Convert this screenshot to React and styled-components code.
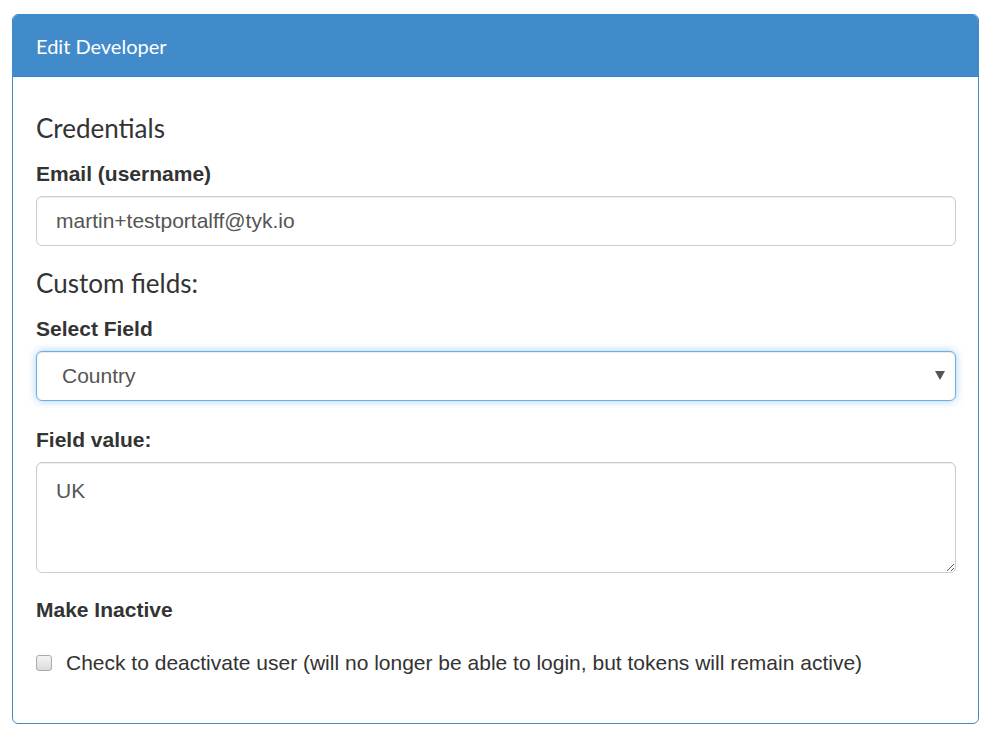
import styled, { createGlobalStyle } from 'styled-components'

const Global = createGlobalStyle`
  * { box-sizing: border-box; }
  body {
    margin: 0;
    background: #fff;
    font-family: "Liberation Sans", Arial, sans-serif;
    color: #333;
  }
`

const Page = styled.div`
  padding: 14px 14px 16px 12px;
`

const Panel = styled.section`
  border: 1.5px solid #428bca;
  border-radius: 6px;
  background: #fff;
  overflow: hidden;
`

const PanelHeading = styled.header`
  background: #428bca;
  color: #fff;
  padding: 0 23px;
  height: 62px;
  display: flex;
  align-items: center;
  font-family: Lato, "Open Sans", sans-serif;
  font-size: 20px;
  border-bottom: 1px solid #3b80bd;
`

const PanelBody = styled.div`
  padding: 35px 22px 48px 23px;
`

const SectionTitle = styled.h3`
  margin: 0 0 18px;
  font-family: Lato, "Open Sans", sans-serif;
  font-weight: 400;
  font-size: 26px;
  line-height: 32px;
  color: #333;
`

const Group = styled.div`
  margin-bottom: ${p => p.$gap || 21}px;
`

const Label = styled.label`
  display: block;
  font-weight: 700;
  font-size: 21px;
  line-height: 24px;
  margin-bottom: 10px;
  color: #333;
`

const fieldBase = `
  display: block;
  width: 100%;
  font-family: "Liberation Sans", Arial, sans-serif;
  font-size: 21px;
  color: #555;
  background: #fff;
  border: 1.5px solid #ccc;
  border-radius: 6px;
  box-shadow: inset 0 1px 1px rgba(0,0,0,.075);
  outline: none;
`

const Input = styled.input`
  ${fieldBase}
  height: 50px;
  padding: 0 19px;
`

const SelectBox = styled.div`
  ${fieldBase}
  position: relative;
  height: 50px;
  padding: 0 25px;
  display: flex;
  align-items: center;
  border-color: #66afe9;
  box-shadow: inset 0 1px 1px rgba(0,0,0,.075), 0 0 8px rgba(102,175,233,.6);
`

const Caret = styled.span`
  position: absolute;
  right: 10px;
  top: 19px;
  width: 0;
  height: 0;
  border-left: 5px solid transparent;
  border-right: 5px solid transparent;
  border-top: 9px solid #555;
`

const TextArea = styled.textarea`
  ${fieldBase}
  height: 111px;
  padding: 14px 19px;
  resize: vertical;
  line-height: 1.3;
`

const CheckRow = styled.label`
  display: flex;
  align-items: center;
  gap: 14px;
  font-size: 21px;
  color: #333;
  margin-top: 29px;
`

const Box = styled.span`
  width: 16px;
  height: 16px;
  border: 1px solid #a9a9a9;
  border-radius: 3px;
  background: linear-gradient(#f4f4f4, #dcdcdc);
  flex-shrink: 0;
`

export default function App() {
  return (
    <>
      <Global />
      <Page>
        <Panel>
          <PanelHeading>Edit Developer</PanelHeading>
          <PanelBody>
            <SectionTitle>Credentials</SectionTitle>
            <Group>
              <Label>Email (username)</Label>
              <Input defaultValue="martin+testportalff@tyk.io" />
            </Group>
            <SectionTitle>Custom fields:</SectionTitle>
            <Group $gap={27}>
              <Label>Select Field</Label>
              <SelectBox>
                Country
                <Caret />
              </SelectBox>
            </Group>
            <Group $gap={25}>
              <Label>Field value:</Label>
              <TextArea defaultValue="UK" />
            </Group>
            <Label>Make Inactive</Label>
            <CheckRow>
              <Box />
              Check to deactivate user (will no longer be able to login, but tokens will remain active)
            </CheckRow>
          </PanelBody>
        </Panel>
      </Page>
    </>
  )
}
